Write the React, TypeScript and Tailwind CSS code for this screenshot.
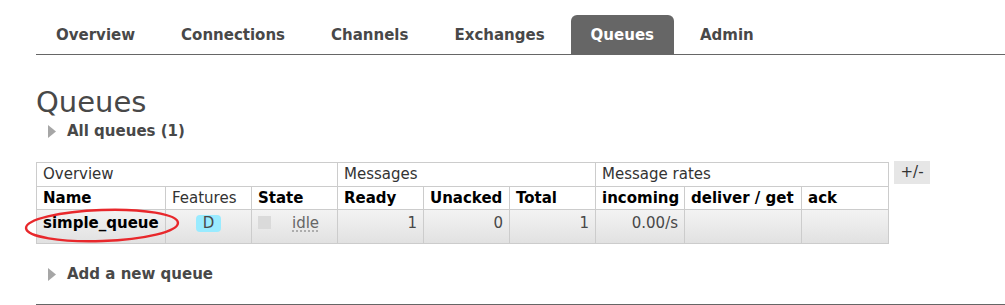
const tabs = ['Overview', 'Connections', 'Channels', 'Exchanges', 'Queues', 'Admin'];

function Arrow() {
  return (
    <svg width="8" height="13" viewBox="0 0 8 13" className="shrink-0">
      <polygon points="0,0 8,6.5 0,13" fill="#a6a6a6" />
    </svg>
  );
}

export default function App() {
  const font = { fontFamily: '"DejaVu Sans", Verdana, sans-serif' };
  return (
    <div className="w-[1005px] h-[305px] overflow-hidden bg-white text-[#484848]" style={font}>
      {/* nav */}
      <div className="ml-[36px] pt-[15px] flex gap-[6px] border-b border-[#666]">
        {tabs.map(t => (
          <div
            key={t}
            className={
              t === 'Queues'
                ? 'h-[39px] px-[20px] pt-[2px] flex items-center rounded-t-[6px] bg-[#666] text-white text-[15px] font-bold'
                : 'h-[39px] px-[20px] pt-[2px] flex items-center text-[15px] font-bold text-[#484848]'
            }
          >
            {t}
          </div>
        ))}
      </div>

      <div className="ml-[36px]">
        <h1 className="text-[29px] leading-[35px] mt-[30px] text-[#484848]">Queues</h1>

        <div className="flex items-center gap-[11px] ml-[12px] mt-[1px] h-[20px]">
          <Arrow />
          <span className="text-[15px] font-bold">All queues (1)</span>
        </div>

        {/* table */}
        <div className="relative flex items-start gap-[5px] mt-[21px]">
          <table className="table-fixed border-collapse w-[852px] text-[15px]">
            <colgroup>
              <col className="w-[129px]" />
              <col className="w-[86px]" />
              <col className="w-[86px]" />
              <col className="w-[86px]" />
              <col className="w-[86px]" />
              <col className="w-[86px]" />
              <col className="w-[89px]" />
              <col className="w-[117px]" />
              <col className="w-[87px]" />
            </colgroup>
            <thead>
              <tr className="h-[23px]">
                <th colSpan={3} className="border border-[#ccc] px-[6px] py-0 text-left font-normal text-[#333]">Overview</th>
                <th colSpan={3} className="border border-[#ccc] px-[6px] py-0 text-left font-normal text-[#333]">Messages</th>
                <th colSpan={3} className="border border-[#ccc] px-[6px] py-0 text-left font-normal text-[#333]">Message rates</th>
              </tr>
              <tr className="h-[23px] text-black">
                <th className="border border-[#ccc] px-[6px] py-0 text-left font-bold">Name</th>
                <th className="border border-[#ccc] px-[6px] py-0 text-left font-normal text-[#333]">Features</th>
                <th className="border border-[#ccc] px-[6px] py-0 text-left font-bold">State</th>
                <th className="border border-[#ccc] px-[6px] py-0 text-left font-bold">Ready</th>
                <th className="border border-[#ccc] px-[6px] py-0 text-left font-bold">Unacked</th>
                <th className="border border-[#ccc] px-[6px] py-0 text-left font-bold">Total</th>
                <th className="border border-[#ccc] px-[6px] py-0 text-left font-bold">incoming</th>
                <th className="border border-[#ccc] px-[6px] py-0 text-left font-bold">deliver / get</th>
                <th className="border border-[#ccc] px-[6px] py-0 text-left font-bold">ack</th>
              </tr>
            </thead>
            <tbody>
              <tr className="h-[33px] bg-gradient-to-b from-[#f3f3f3] to-[#e1e1e1]">
                <td className="border border-[#ccc] px-[6px] pt-[2px] pb-[8px] align-top font-bold text-black">simple_queue</td>
                <td className="border border-[#ccc] px-[6px] pt-[2px] pb-[8px] align-top text-center">
                  <span className="inline-block w-[25px] h-[17px] rounded-[4px] bg-[#99ebff] leading-[17px] mt-[1px]">D</span>
                </td>
                <td className="border border-[#ccc] px-[6px] pt-[2px] pb-[8px] align-top">
                  <div className="flex items-start">
                    <span className="inline-block w-[13px] h-[13px] bg-[#dadada] mt-[4px]" />
                    <span className="ml-[21px] text-[#666] underline decoration-dotted decoration-[#999] underline-offset-[3px]">idle</span>
                  </div>
                </td>
                <td className="border border-[#ccc] px-[6px] pt-[2px] pb-[8px] align-top text-right">1</td>
                <td className="border border-[#ccc] px-[6px] pt-[2px] pb-[8px] align-top text-right">0</td>
                <td className="border border-[#ccc] px-[6px] pt-[2px] pb-[8px] align-top text-right">1</td>
                <td className="border border-[#ccc] px-[6px] pt-[2px] pb-[8px] align-top text-right">0.00/s</td>
                <td className="border border-[#ccc] px-[6px] pt-[2px] pb-[8px] align-top"></td>
                <td className="border border-[#ccc] px-[6px] pt-[2px] pb-[8px] align-top"></td>
              </tr>
            </tbody>
          </table>
          <div className="h-[23px] w-[36px] -mt-[1px] bg-[#e6e6e6] flex items-center justify-center text-[15px] text-[#333]">+/-</div>

          {/* annotation */}
          <svg className="absolute left-[-12px] top-[46px] pointer-events-none" width="158" height="36" viewBox="0 0 158 36">
            <ellipse cx="78" cy="17.5" rx="76" ry="15.5" fill="none" stroke="#e8282c" strokeWidth="2.4" transform="rotate(-2 78 17.5)" />
          </svg>
        </div>

        <div className="flex items-center gap-[11px] ml-[12px] mt-[21px] h-[20px]">
          <Arrow />
          <span className="text-[15px] font-bold">Add a new queue</span>
        </div>

        <div className="mt-[19px] border-t border-[#666]" />
      </div>
    </div>
  );
}
